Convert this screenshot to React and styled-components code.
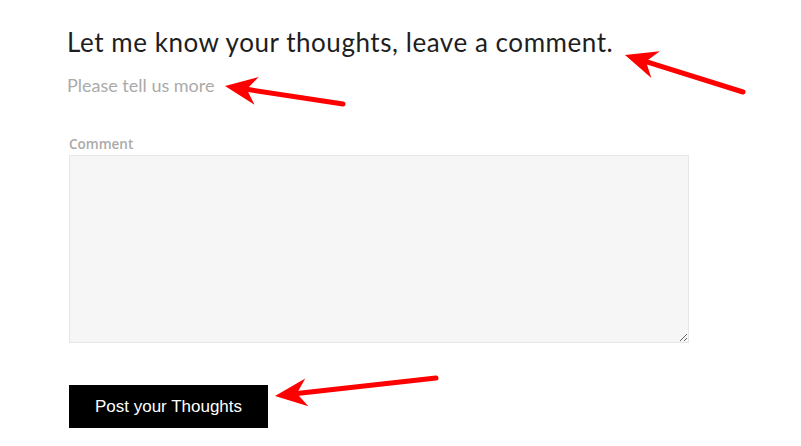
import React from "react";
import styled, { createGlobalStyle } from "styled-components";

const GlobalStyle = createGlobalStyle`
  html, body {
    margin: 0;
    background: #ffffff;
  }
`;

const Page = styled.div`
  position: relative;
  width: 801px;
  height: 446px;
  overflow: hidden;
  box-sizing: border-box;
  padding: 24px 0 0 67px;
`;

const Title = styled.h2`
  margin: 0;
  font-family: Lato, "Open Sans", sans-serif;
  font-weight: 400;
  font-size: 26px;
  line-height: 36px;
  letter-spacing: 0.55px;
  color: #1e1e1e;
`;

const Subtitle = styled.p`
  margin: 13px 0 0;
  font-family: Lato, "Open Sans", sans-serif;
  font-size: 18px;
  line-height: 24px;
  color: #aaaaaa;
`;

const Form = styled.form`
  display: flex;
  flex-direction: column;
  align-items: flex-start;
  margin-top: 38px;
  padding-left: 2px;
`;

const Label = styled.label`
  font-family: "Open Sans", sans-serif;
  font-weight: 600;
  font-size: 13.5px;
  line-height: 18px;
  color: #aaaaaa;
`;

const TextArea = styled.textarea`
  box-sizing: border-box;
  width: 620px;
  height: 188px;
  margin-top: 2px;
  background: #f6f6f6;
  border: 1px solid #e6e6e6;
  border-radius: 0;
  resize: vertical;
  outline: none;
`;

const SubmitButton = styled.button`
  margin-top: 42px;
  width: 199px;
  height: 43px;
  border: none;
  background: #000;
  color: #fff;
  font-family: "Liberation Sans", Arial, sans-serif;
  font-size: 17px;
  cursor: pointer;
`;

const Overlay = styled.svg`
  position: absolute;
  left: 0;
  top: 0;
  pointer-events: none;
`;

// red annotation arrow: line from tail (x1,y1) to a barbed head at (x2,y2)
const Arrow = ({ x1, y1, x2, y2 }) => {
  const ang = Math.atan2(y2 - y1, x2 - x1);
  const len = 32;
  const wing = 14;
  const bx = x2 - Math.cos(ang) * len;
  const by = y2 - Math.sin(ang) * len;
  const px = -Math.sin(ang) * wing;
  const py = Math.cos(ang) * wing;
  const mx = x2 - Math.cos(ang) * (len - 10);
  const my = y2 - Math.sin(ang) * (len - 10);
  return (
    <g>
      <line x1={x1} y1={y1} x2={mx} y2={my} stroke="#ff0000" strokeWidth="5" strokeLinecap="round" />
      <polygon points={`${x2},${y2} ${bx + px},${by + py} ${mx},${my} ${bx - px},${by - py}`} fill="#ff0000" />
    </g>
  );
};

export default function App() {
  return (
    <>
      <GlobalStyle />
      <Page>
        <Title>Let me know your thoughts, leave a comment.</Title>
        <Subtitle>Please tell us more</Subtitle>
        <Form onSubmit={(e) => e.preventDefault()}>
          <Label htmlFor="comment">Comment</Label>
          <TextArea id="comment" />
          <SubmitButton type="submit">Post your Thoughts</SubmitButton>
        </Form>
        <Overlay width="801" height="446">
          <Arrow x1={743} y1={92} x2={625} y2={55} />
          <Arrow x1={343} y1={104} x2={225} y2={86} />
          <Arrow x1={436} y1={378} x2={275} y2={396} />
        </Overlay>
      </Page>
    </>
  );
}
